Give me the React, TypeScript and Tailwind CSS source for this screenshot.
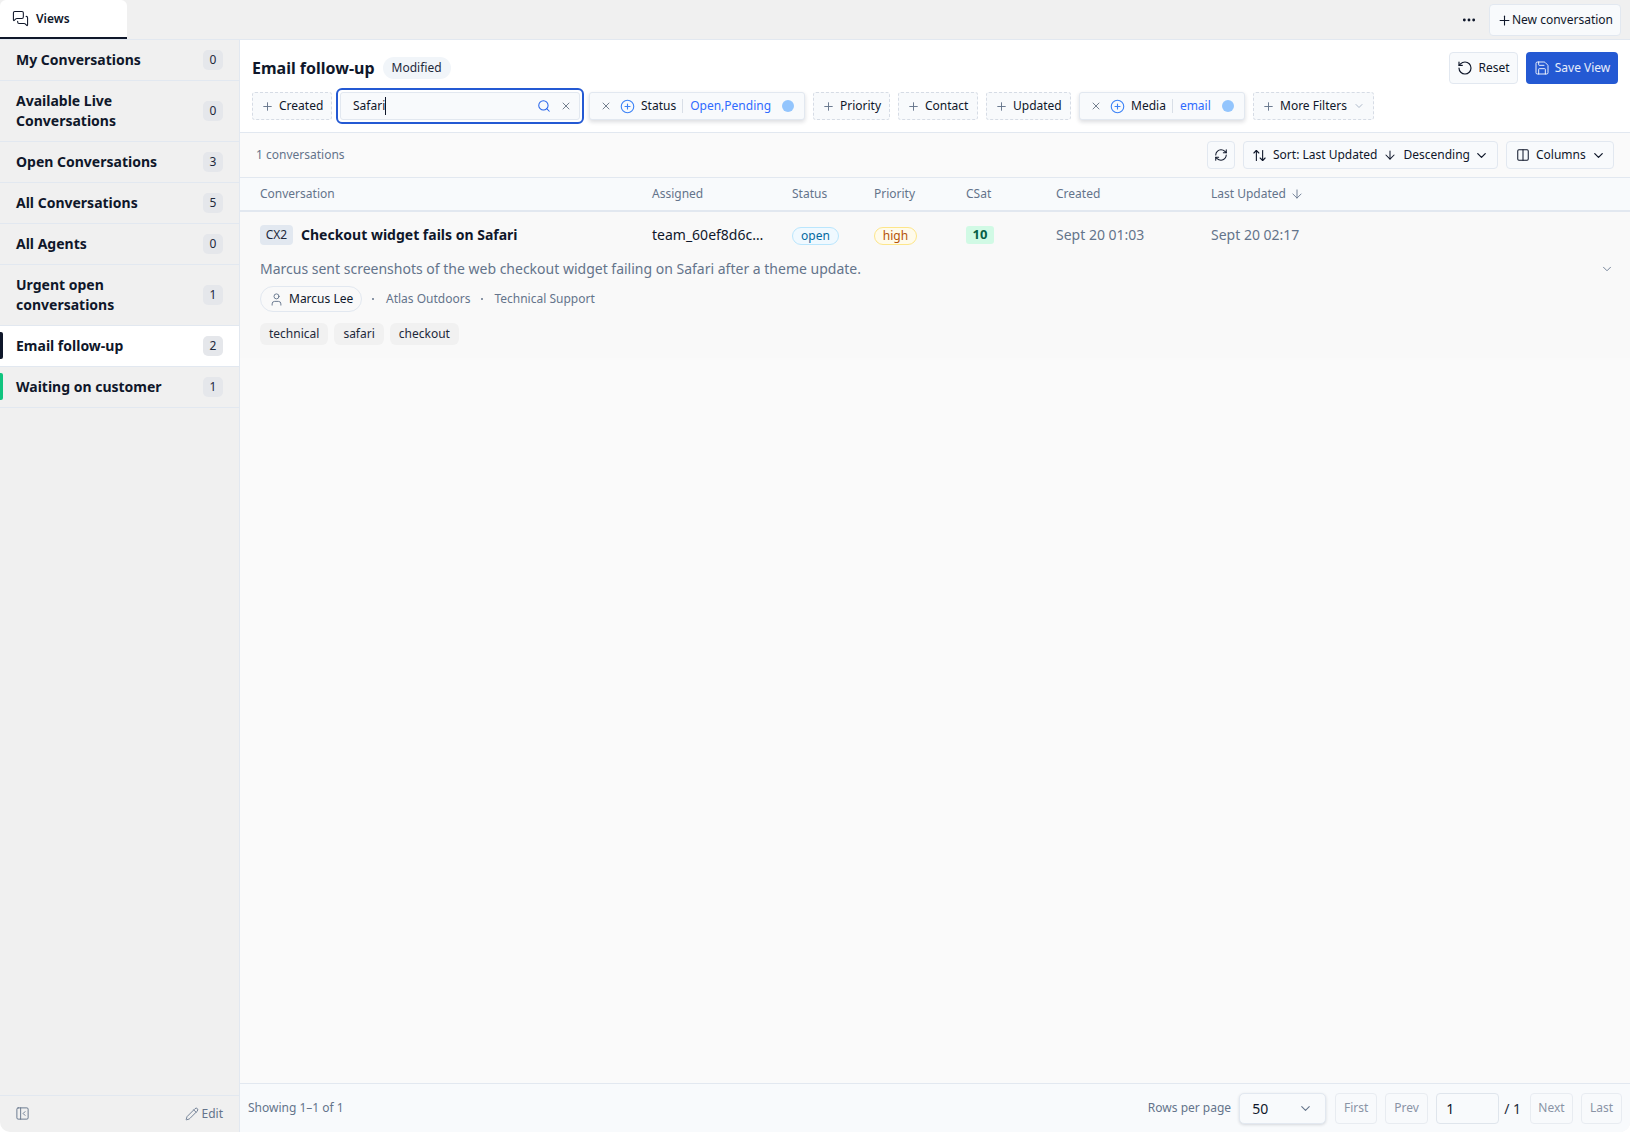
import React from "react";
import {
  MessagesSquare, Ellipsis, Plus, X, Search, CirclePlus, RotateCcw, Save, RefreshCw,
  ArrowUpDown, ArrowDown, ChevronDown, Columns2, User, PanelLeftClose, Pencil,
} from "lucide-react";

const views = [
  { name: "My Conversations", count: 0 },
  { name: "Available Live Conversations", count: 0 },
  { name: "Open Conversations", count: 3 },
  { name: "All Conversations", count: 5 },
  { name: "All Agents", count: 0 },
  { name: "Urgent open conversations", count: 1 },
  { name: "Email follow-up", count: 2, active: true, bar: "bg-[#0f172a]" },
  { name: "Waiting on customer", count: 1, bar: "bg-[#10c47f]" },
];

function SidebarRow({ v }: { v: (typeof views)[number] }) {
  return (
    <div className={`relative flex items-center justify-between border-b border-[#e2e8f0] pl-4 pr-[16px] py-[10px] ${v.active ? "bg-white" : ""}`}>
      {v.bar && <span className={`absolute left-0 top-[6px] bottom-[7px] w-[3px] rounded-r-[2px] ${v.bar}`} />}
      <span className="w-[165px] text-[14px] leading-[20px] font-bold text-[#0f172a]">{v.name}</span>
      <span className="flex h-[20px] w-[20px] items-center justify-center rounded-[5px] bg-[#e5e7eb] text-[12px] text-[#1e293b]">{v.count}</span>
    </div>
  );
}

function AddFilter({ label, w }: { label: string; w: string }) {
  return (
    <div className={`flex h-[28px] ${w} items-center gap-[6px] rounded-[3px] border border-dashed border-[#d6dce5] bg-[#f8fafc] pl-[8px] text-[12px] text-[#0f172a]`}>
      <Plus size={13} className="text-[#64748b]" strokeWidth={1.75} />
      <span className="-ml-[1px]">{label}</span>
    </div>
  );
}

function ActiveFilter({ label, value, w }: { label: string; value: string; w: string }) {
  return (
    <div className={`flex h-[28px] ${w} items-center rounded-[3px] border border-[#e2e8f0] bg-[#f8fafc] pl-[10px] pr-[10px] text-[12px] text-[#0f172a] shadow-[0_2px_4px_rgba(15,23,42,0.15)]`}>
      <X size={12} className="text-[#475569]" strokeWidth={1.5} />
      <CirclePlus size={15} className="ml-[8px] text-[#3b82f6]" strokeWidth={1.75} />
      <span className="ml-[6px]">{label}</span>
      <span className="mx-[6px] h-[14px] w-px bg-[#d9dfe7]" />
      <span className="ml-[1px] text-[#2f6bff]">{value}</span>
      <span className="ml-auto h-[12px] w-[12px] rounded-full bg-[#93c5fd]" />
    </div>
  );
}

function PageButton({ label, w }: { label: string; w: string }) {
  return (
    <div className={`flex h-[31px] ${w} items-center justify-center rounded-[4px] border border-[#e8ecf1] text-[12px] text-[#8a94a6]`}>{label}</div>
  );
}

const gridCols = "grid grid-cols-[392px_140px_82px_92px_90px_155px_1fr] pl-[20px]";

export default function App() {
  return (
    <div className="flex h-[1132px] w-full flex-col overflow-hidden rounded-b-[10px] bg-[#f0f0f0] text-[#0f172a] font-['Noto_Sans',sans-serif]">
      {/* top bar */}
      <div className="flex h-[40px] shrink-0 items-start justify-between border-b border-[#e2e8f0]">
        <div className="flex h-[39px] w-[127px] items-center gap-[7px] rounded-t-[6px] border-b-2 border-[#0f172a] bg-white pl-[12px] text-[12px] font-semibold">
          <MessagesSquare size={17} strokeWidth={1.5} />
          <span>Views</span>
        </div>
        <div className="flex items-center pr-[9px] pt-[4px]">
          <Ellipsis size={16} className="mr-[12px]" strokeWidth={2.25} />
          <div className="flex h-[32px] w-[132px] items-center justify-center rounded-[4px] border border-[#e2e8f0] bg-[#f8fafc] text-[12px]">
            <Plus size={15} strokeWidth={1.75} />
            <span>New conversation</span>
          </div>
        </div>
      </div>

      <div className="flex min-h-0 flex-1">
        {/* sidebar */}
        <aside className="flex w-[240px] shrink-0 flex-col border-r border-[#e2e8f0]">
          <div className="flex-1">
            {views.map((v) => <SidebarRow key={v.name} v={v} />)}
          </div>
          <div className="flex h-[37px] items-center justify-between border-t border-[#e2e8f0] pb-[1px] pl-[15px] pr-[16px]">
            <PanelLeftClose size={15} className="text-[#64748b]" strokeWidth={1.5} />
            <div className="flex items-center gap-[3px] text-[12px] text-[#64748b]">
              <Pencil size={14} strokeWidth={1.5} />
              <span>Edit</span>
            </div>
          </div>
        </aside>

        {/* main */}
        <main className="flex min-w-0 flex-1 flex-col bg-[#fafafa]">
          <section className="h-[93px] shrink-0 border-b border-[#e2e8f0] bg-white pl-[12px] pr-[12px] pt-[12px]">
            <div className="flex h-[32px] items-center justify-between">
              <div className="flex items-center gap-[8px]">
                <h1 className="text-[16px] font-bold leading-[24px]">Email follow-up</h1>
                <span className="flex h-[22px] items-center rounded-full bg-[#f1f5f9] px-[9px] text-[12px] text-[#1e293b]">Modified</span>
              </div>
              <div className="flex items-center gap-[8px]">
                <div className="flex h-[32px] w-[69px] items-center justify-center gap-[5px] rounded-[4px] border border-[#e2e8f0] bg-[#f8fafc] text-[12px]">
                  <RotateCcw size={16} strokeWidth={1.75} />
                  <span>Reset</span>
                </div>
                <div className="flex h-[32px] w-[92px] items-center justify-center gap-[5px] rounded-[4px] bg-[#2459d3] text-[12px] text-white/90">
                  <Save size={16} strokeWidth={1.5} />
                  <span>Save View</span>
                </div>
              </div>
            </div>
            <div className="mt-[4px] flex items-center gap-[8px]">
              <AddFilter label="Created" w="w-[80px]" />
              <div className="relative -ml-[4px] -mr-[3px] flex h-[36px] w-[248px] shrink-0 items-center rounded-[6px] border-2 border-[#2459d3] p-[2px]">
                <div className="flex h-full w-full items-center rounded-[3px] border border-[#e2e8f0] bg-[#f8fafc] pl-[12px] pr-[7px] text-[12px]">
                  <span className="border-r border-[#0f172a]">Safari</span>
                  <Search size={14} className="ml-auto text-[#2563eb]" strokeWidth={1.75} />
                  <X size={12} className="ml-[9px] text-[#475569]" strokeWidth={1.5} />
                </div>
              </div>
              <ActiveFilter label="Status" value="Open,Pending" w="w-[216px]" />
              <AddFilter label="Priority" w="w-[77px]" />
              <AddFilter label="Contact" w="w-[80px]" />
              <AddFilter label="Updated" w="w-[85px]" />
              <ActiveFilter label="Media" value="email" w="w-[166px]" />
              <div className="flex h-[28px] w-[121px] items-center gap-[6px] rounded-[3px] border border-dashed border-[#d6dce5] bg-[#f8fafc] pl-[8px] text-[12px]">
                <Plus size={13} className="text-[#64748b]" strokeWidth={1.75} />
                <span className="-ml-[1px]">More Filters</span>
                <ChevronDown size={12} className="text-[#94a3b8]" strokeWidth={1.5} />
              </div>
            </div>
          </section>

          {/* toolbar */}
          <div className="flex h-[45px] shrink-0 items-center justify-between border-b border-[#e2e8f0] pl-[16px] pr-[16px]">
            <span className="text-[12px] text-[#64748b]">1 conversations</span>
            <div className="flex items-center gap-[8px] text-[12px]">
              <div className="flex h-[28px] w-[28px] items-center justify-center rounded-[4px] border border-[#e2e8f0] bg-[#f8fafc]">
                <RefreshCw size={14} strokeWidth={1.75} />
              </div>
              <div className="flex h-[28px] w-[255px] items-center rounded-[4px] border border-[#e2e8f0] bg-[#f8fafc] pl-[8px]">
                <ArrowUpDown size={15} strokeWidth={1.75} />
                <span className="ml-[6px]">Sort: Last Updated</span>
                <ArrowDown size={14} className="ml-[6px]" strokeWidth={1.75} />
                <span className="ml-[6px]">Descending</span>
                <ChevronDown size={15} className="ml-[4px]" strokeWidth={2} />
              </div>
              <div className="flex h-[28px] w-[108px] items-center rounded-[4px] border border-[#e2e8f0] bg-[#f8fafc] pl-[9px]">
                <Columns2 size={14} strokeWidth={1.75} />
                <span className="ml-[6px]">Columns</span>
                <ChevronDown size={15} className="ml-[5px]" strokeWidth={2} />
              </div>
            </div>
          </div>

          {/* table header */}
          <div className={`${gridCols} h-[34px] shrink-0 items-center border-b-2 border-[#e2e8f0] bg-[#f8fafc] text-[12px] text-[#64748b]`}>
            <span>Conversation</span>
            <span>Assigned</span>
            <span>Status</span>
            <span>Priority</span>
            <span>CSat</span>
            <span>Created</span>
            <span className="flex items-center gap-[4px]">Last Updated <ArrowDown size={14} strokeWidth={1.5} /></span>
          </div>

          {/* row */}
          <div className="relative h-[146px] shrink-0 bg-[#f9f9f9]">
            <div className={`${gridCols} items-center pt-[13px]`}>
              <div className="flex items-center gap-[8px]">
                <span className="flex h-[20px] w-[33px] items-center justify-center rounded-[4px] bg-[#e2e8f0] text-[12px] text-[#1e293b]">CX2</span>
                <span className="text-[14px] font-bold leading-[20px]">Checkout widget fails on Safari</span>
              </div>
              <span className="text-[14px] leading-[20px]">team_60ef8d6c…</span>
              <span className="mt-[2px] flex h-[18px] w-[47px] items-center justify-center rounded-full border border-[#bae6fd] bg-[#f0f9ff] text-[12px] text-[#0369a1]">open</span>
              <span className="mt-[2px] flex h-[18px] w-[43px] items-center justify-center rounded-full border border-[#fde68a] bg-[#fffbeb] text-[12px] text-[#b45309]">high</span>
              <span className="flex h-[18px] w-[28px] items-center justify-center rounded-[3px] bg-[#d1fae5] text-[13px] font-bold text-[#065f46]">10</span>
              <span className="text-[14px] leading-[20px] text-[#64748b]">Sept 20 01:03</span>
              <span className="text-[14px] leading-[20px] text-[#64748b]">Sept 20 02:17</span>
            </div>
            <div className="mt-[14px] pl-[20px] text-[14px] leading-[20px] text-[#64748b]">
              Marcus sent screenshots of the web checkout widget failing on Safari after a theme update.
            </div>
            <ChevronDown size={14} className="absolute right-[16px] top-[50px] text-[#64748b]" strokeWidth={1.5} />
            <div className="mt-[7px] flex items-center pl-[20px] text-[12px] text-[#64748b]">
              <span className="flex h-[26px] w-[102px] items-center gap-[5px] rounded-full border border-[#e2e8f0] pl-[8px] text-[#0f172a]">
                <User size={15} className="text-[#64748b]" strokeWidth={1.5} />
                Marcus Lee
              </span>
              <span className="ml-[10px] h-[2px] w-[2px] rounded-full bg-[#64748b]" />
              <span className="ml-[12px]">Atlas Outdoors</span>
              <span className="ml-[11px] h-[2px] w-[2px] rounded-full bg-[#64748b]" />
              <span className="ml-[11px]">Technical Support</span>
            </div>
            <div className="mt-[11px] flex items-center gap-[6px] pl-[20px] text-[12px] text-[#1e293b]">
              <span className="flex h-[22px] items-center rounded-[6px] bg-[#f1f1f1] px-[9px]">technical</span>
              <span className="flex h-[22px] items-center rounded-[6px] bg-[#f1f1f1] px-[9px]">safari</span>
              <span className="flex h-[22px] items-center rounded-[6px] bg-[#f1f1f1] px-[9px]">checkout</span>
            </div>
          </div>

          <div className="flex-1" />

          {/* footer */}
          <div className="flex h-[49px] shrink-0 items-center justify-between border-t border-[#e2e8f0] bg-[#f8fafc] pl-[8px] pr-[8px] text-[12px] text-[#64748b]">
            <span>Showing 1–1 of 1</span>
            <div className="flex items-center gap-[8px]">
              <span>Rows per page</span>
              <div className="mr-[1px] flex h-[31px] w-[87px] items-center justify-between rounded-[5px] border border-[#e2e8f0] bg-[#f8fafc] pl-[12px] pr-[12px] text-[14px] text-[#0f172a] shadow-[0_1px_3px_rgba(15,23,42,0.15)]">
                <span>50</span>
                <ChevronDown size={15} className="text-[#64748b]" strokeWidth={1.75} />
              </div>
              <PageButton label="First" w="w-[42px]" />
              <PageButton label="Prev" w="w-[43px]" />
              <div className="flex h-[31px] w-[63px] items-center rounded-[4px] border border-[#dfe5ec] pl-[9px] text-[14px] text-[#0f172a]">1</div>
              <span className="-ml-[3px] mr-[1px] text-[14px] text-[#1e293b]">/ 1</span>
              <PageButton label="Next" w="w-[43px]" />
              <PageButton label="Last" w="w-[41px]" />
            </div>
          </div>
        </main>
      </div>
    </div>
  );
}
